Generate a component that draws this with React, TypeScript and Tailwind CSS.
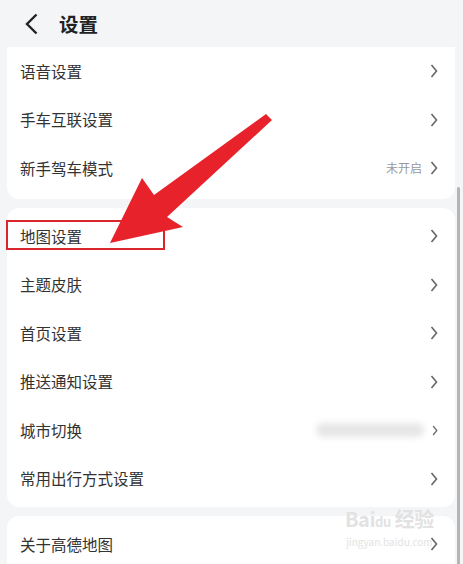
import React from 'react';

const font = { fontFamily: '"Noto Sans CJK SC", "Noto Sans", sans-serif' };

function Chevron({ small }: { small?: boolean }) {
  return (
    <svg width={small ? 6 : 8} height={small ? 11 : 14} viewBox="0 0 8 14" fill="none">
      <polyline points="1.5,1 6.5,7 1.5,13" stroke="#666" strokeWidth="1.6" strokeLinejoin="miter" />
    </svg>
  );
}

type Row = { label: string; extra?: string; blurred?: boolean };

function SettingRow({ row }: { row: Row }) {
  return (
    <div className="h-[48.5px] flex items-center justify-between pl-[13px] pr-[17px]">
      <span className="text-[15.5px] text-[#333]">{row.label}</span>
      <div className="flex items-center gap-2">
        {row.extra && <span className="text-[12px] text-[#999]">{row.extra}</span>}
        {row.blurred && <div className="w-[108px] h-[14px] bg-[#e6e6e6] rounded-full blur-[3px]" />}
        <Chevron small={row.blurred} />
      </div>
    </div>
  );
}

const group1: Row[] = [
  { label: '语音设置' },
  { label: '手车互联设置' },
  { label: '新手驾车模式', extra: '未开启' },
];

const group2: Row[] = [
  { label: '地图设置' },
  { label: '主题皮肤' },
  { label: '首页设置' },
  { label: '推送通知设置' },
  { label: '城市切换', blurred: true },
  { label: '常用出行方式设置' },
];

const group3: Row[] = [{ label: '关于高德地图' }];

export default function App() {
  return (
    <div className="relative w-[463px] h-[564px] overflow-hidden bg-[#f4f5f7]" style={font}>
      {/* Header */}
      <div className="h-[47px] flex items-center pl-[25px] gap-[21px]">
        <svg width="13" height="22" viewBox="0 0 13 22" fill="none">
          <polyline points="11.5,1.5 2,11 11.5,20.5" stroke="#222" strokeWidth="2.4" />
        </svg>
        <span className="text-[19.5px] font-bold text-[#222]">设置</span>
      </div>

      <div className="pl-[7px] pr-[8px] flex flex-col gap-[9px]">
        <div className="bg-white rounded-b-[12px] pb-[6.5px]">
          {group1.map(r => <SettingRow key={r.label} row={r} />)}
        </div>
        <div className="bg-white rounded-[12px] py-[4px]">
          {group2.map(r => <SettingRow key={r.label} row={r} />)}
        </div>
        <div className="bg-white rounded-[12px] py-[4px]">
          {group3.map(r => <SettingRow key={r.label} row={r} />)}
        </div>
      </div>

      {/* scrollbar */}
      <div className="absolute left-[457px] top-[187px] w-[3px] h-[390px] bg-[#b5b5b5] rounded-full" />

      {/* annotation: red box + arrow */}
      <div className="absolute left-[6px] top-[220px] w-[159px] h-[30px] border-2 border-[#d8262c]" />
      <svg className="absolute left-0 top-0" width="463" height="564" viewBox="0 0 463 564">
        <polygon
          points="110,243 142,178 154,195 266,114 272,120 167,217 183,227"
          fill="#e8222a"
        />
      </svg>

      {/* watermark */}
      <div className="absolute left-[345px] top-[508px] flex flex-col items-center gap-[3px] text-[#e2e2e2]">
        <span className="text-[20px] font-bold tracking-tight leading-[22px]">Bai<span className="text-[13px]">du</span> 经验</span>
        <span className="text-[10px] leading-[12px]">jingyan.baidu.com</span>
      </div>
    </div>
  );
}
